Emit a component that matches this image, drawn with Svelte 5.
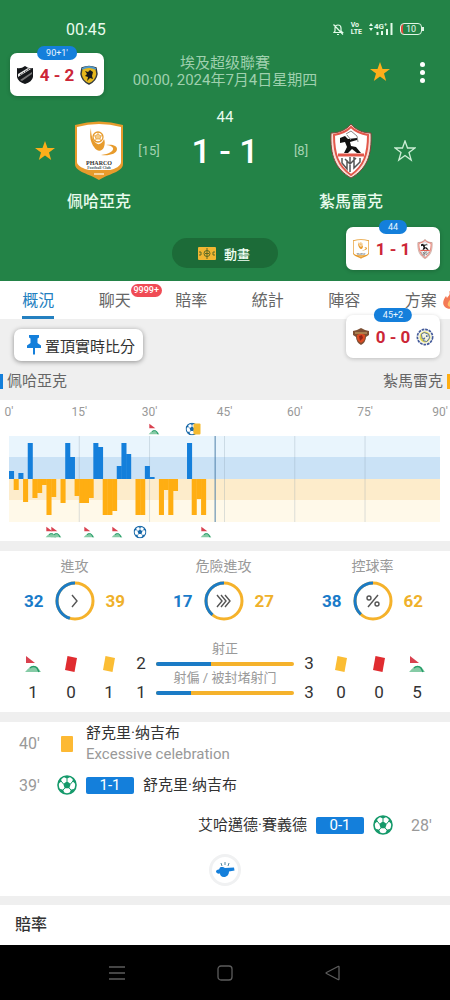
<script>
  const tabs = ['概況', '聊天', '賠率', '統計', '陣容', '方案'];

  // The axis holds 90 minutes plus one added slot for each half.
  const slots = 92;
  const pct = (n) => (n / slots) * 100;
  const axis = [
    [0, "0'"], [15, "15'"], [30, "30'"], [46, "45'"], [61, "60'"], [76, "75'"], [92, "90'"]
  ];
  const homeBars = [
    [0, 8], [2, 6], [4, 36], [12, 36], [13, 22], [18, 36], [19, 32],
    [23, 13], [24, 36], [25, 25], [29, 13], [30, 2], [38, 36]
  ];
  const awayBars = [
    [1, 11], [3, 23], [5, 19], [6, 14], [7, 6], [8, 36], [9, 18], [11, 24], [14, 17], [15, 24],
    [16, 24], [17, 19], [20, 36], [21, 36], [22, 32], [27, 36], [28, 36], [32, 36], [33, 11],
    [34, 36], [35, 12], [39, 36], [40, 20], [41, 36]
  ];
  const homeMarks = [[31, 'flag'], [39, 'ball'], [40.2, 'card']];
  const awayMarks = [[9, 'flag'], [10, 'flag'], [17, 'flag'], [23, 'flag'], [28, 'ball'], [42, 'flag']];

  const rings = [
    { label: '進攻', home: 32, away: 39, icon: 'one' },
    { label: '危險進攻', home: 17, away: 27, icon: 'three' },
    { label: '控球率', home: 38, away: 62, icon: 'percent' }
  ];
  const round = 2 * Math.PI * 18;

  const homeCounts = [['corner', 1, '角球'], ['red', 0, '紅牌'], ['yellow', 1, '黃牌']];
  const awayCounts = [['yellow', 0, '黃牌'], ['red', 0, '紅牌'], ['corner', 5, '角球']];
  const shots = [
    { label: '射正', home: 2, away: 3 },
    { label: '射偏 / 被封堵射门', home: 1, away: 3 }
  ];
</script>

{#snippet flag()}
  <svg class="flag" viewBox="0 0 18 18" aria-hidden="true">
    <path d="M2 1 11 8H2Z" fill="#d9414f" />
    <path d="M1 17c3-3 5-6 9-6 3 0 5 3 7 6Z" fill="#86cba6" />
    <path d="M6 13c2-2 5-2 7 0l2 4" fill="none" stroke="#249c68" stroke-width="1.5" />
  </svg>
{/snippet}

{#snippet ball(color)}
  <svg class="ball" viewBox="0 0 20 20" aria-hidden="true">
    <circle cx="10" cy="10" r="9" fill="#fff" stroke={color} stroke-width="1.6" />
    <g fill={color}>
      <path d="m10 6.2 3.7 2.7-1.4 4.3H7.700L6.300 8.900Z" />
      <path d="M6.500 1.800 10 3.800l3.500-2L10 1Z" />
      <path d="m1.200 9.200 3.200-3-.3-3.200-2.400 3Z" />
      <path d="m18.800 9.200-3.200-3 .3-3.200 2.400 3Z" />
      <path d="m2.600 13.700 3.500 1 1.500 3.500-3-1.200Z" />
      <path d="m17.400 13.700-3.500 1-1.500 3.500 3-1.200Z" />
    </g>
    <path d="M10 6.500v-3M6.500 9 3.800 5.700M13.500 9l2.700-3.300M7.800 13l-1.700 2M12.200 13l1.700 2" fill="none" stroke={color} />
  </svg>
{/snippet}

{#snippet card(kind)}
  <svg class="card" viewBox="0 0 14 18" aria-hidden="true">
    <path d="M3.500 1 13 3 10.500 17 1 15Z" fill={kind === 'red' ? '#e02c30' : '#fbbd34'} />
  </svg>
{/snippet}

{#snippet star(filled)}
  <svg viewBox="0 0 22 22" aria-hidden="true">
    <path d="m11 1 2.500 7H21l-6 4.500L17.200 20 11 15.500 4.800 20 7 12.500 1 8h7.500Z"
      fill={filled ? '#fdae1a' : 'none'} stroke={filled ? 'none' : '#cdeed6'} stroke-width="1.3" />
  </svg>
{/snippet}

{#snippet pharco()}
  <svg viewBox="0 0 50 60" aria-hidden="true">
    <path d="M1 4Q25-3 49 4v39c0 8-15 10-24 16C16 53 1 51 1 43Z" fill="#e79b2c" />
    <path d="M3 6Q25 0 47 6v35c0 4-6 7-11 8H15C10 48 3 45 3 41Z" fill="#fff" />
    <path d="M17 7c-2 9 0 15 3 19 3 5 8 5 10 0 1-3 1-6 0-8-2 5-6 7-9 3-3-3-4-8-4-14Z" fill="#e79b2c" />
    <circle cx="24" cy="16" r="5" fill="#fff" stroke="#e79b2c" stroke-width="1.300" />
    <path d="m24 13 3 2-1 3h-4l-1-3Zm0-2v2m-3 2-2-1m8 1 2-1m-3 4 1 2m-5-2-1 2" fill="#f5cb85" stroke="#e79b2c" stroke-width=".7" />
    <path d="M27 34c8-1 13-4 12-7-1-2-4-3-7-3 7-1 11 1 11 4 0 5-8 7-16 6Z" fill="#e79b2c" />
    <text x="25" y="44" text-anchor="middle" font-family="Liberation Serif, serif" font-weight="700" font-size="6" fill="#333">PHARCO</text>
    <text x="25" y="48" text-anchor="middle" font-family="Liberation Serif, serif" font-weight="700" font-size="4" fill="#456">Football Club</text>
    <path d="M20 53h10" stroke="#f7d39c" stroke-width="2" />
  </svg>
{/snippet}

{#snippet zamalek()}
  <svg viewBox="0 0 42 56" aria-hidden="true">
    <path d="M21 1c5 6 12 9 20 9 1 22-4 36-20 45C5 46 0 32 1 10 9 10 16 7 21 1Z" fill="#f8ded6" stroke="#7c4338" />
    <path d="M21 4c5 5 11 7 17 8 0 19-4 31-17 40C8 43 4 31 4 12c6-1 12-3 17-8Z" fill="#fff" stroke="#e2574a" stroke-width="2" />
    <path d="M8 32h26" stroke="#e2574a" stroke-width="3" />
    <path d="m10 15 5-2 3 3 9-1v2l-7 2 1 4 5 1 5 6h-4l-5-4-4 4h-4l3-6-2-5-5 1Z" fill="#111" />
    <path d="m16 11 5-3 6 5 1 6M17 12l4 5" fill="none" stroke="#888" />
    <path d="M12 35v5l5 6v-9m3-3v15m4-15v11l6-6v-4M15 36l5 5 6-6" fill="none" stroke="#555" stroke-width="1.500" />
  </svg>
{/snippet}

<main class="page">
  <header class="hero">
    <div class="status">
      <span class="time">00:45</span>
      <span class="signals">
        <svg width="12" height="13" viewBox="0 0 12 13" fill="none" stroke="#e3fbe9" stroke-width="1.200" aria-hidden="true">
          <path d="M2 9.500h8.500L9 8V5c0-4-6-4-6 0v3ZM5 11.500h2M1.500 1.500l9.500 10" />
        </svg>
        <span class="volte"><b>Vo</b><b>LTE</b></span>
        <svg width="24" height="14" viewBox="0 0 24 14" aria-hidden="true">
          <path d="m0 4 2-3 2 3Zm0 2 2 3 2-3Z" fill="#e3fbe9" />
          <text x="5" y="7" font-size="8" font-weight="700" fill="#e3fbe9">4G⁺</text>
          <path d="M8.500 10v3m4.500-4v4m5-6v6m4.500-12v12" stroke="#e3fbe9" stroke-width="2" />
        </svg>
        <span class="battery">10</span>
      </span>
    </div>

    <div class="title">
      <h1>埃及超级聯賽<span>00:00, 2024年7月4日星期四</span></h1>
      <div class="actions">
        <button class="icon" aria-label="收藏比賽">{@render star(true)}</button>
        <button class="icon more" aria-label="更多"><i></i><i></i><i></i></button>
      </div>
    </div>

    <div class="match">
      <button class="icon fav" aria-label="收藏佩哈亞克">{@render star(true)}</button>
      <div class="crest">{@render pharco()}</div>
      <span class="rank">[15]</span>
      <div class="score"><span>44</span><strong>1 - 1</strong></div>
      <span class="rank">[8]</span>
      <div class="crest small">{@render zamalek()}</div>
      <button class="icon fav last" aria-label="收藏紮馬雷克">{@render star(false)}</button>
      <h2 class="home">佩哈亞克</h2>
      <h2 class="away">紮馬雷克</h2>
    </div>

    <button class="animation">
      <svg width="18" height="13" viewBox="0 0 18 13" aria-hidden="true">
        <rect width="18" height="13" rx="1" fill="#f2b632" />
        <g fill="none" stroke="#5d6a25"><circle cx="9" cy="6.500" r="3" /><path d="M9 1v11M1 5h2v3H1M17 5h-2v3h2M7 6.500h4" /></g>
      </svg>
      動畫
    </button>
  </header>

  <nav class="tabs">
    {#each tabs as tab, i}
      <a href="#tab-{i}" class:active={i === 0}>
        <span>{tab}</span>
        {#if i === 1}<b class="badge">9999+</b>{/if}
        {#if i === 5}
          <svg class="fire" viewBox="0 0 14 18" aria-hidden="true"><path d="M6 0c2 4-1 5-2 7L3 5c-3 4-4 8-1 11 3 3 9 2 11-2 1-5-3-6-3-10C9 5 9 6 9 7 9 4 8 1 6 0Z" fill="#f47a55" /><path d="M7 9c-3 3-3 6 0 7 3-1 3-4 0-7Z" fill="#ffc06d" /></svg>
        {/if}
      </a>
    {/each}
  </nav>

  <section class="intro">
    <button class="pin">
      <svg width="14" height="20" viewBox="0 0 14 20" aria-hidden="true">
        <path d="M2 0h10v2.500l-1.500 1V8L14 10.500V13H8v6l-1 1-1-1v-6H0v-2.500L3.500 8V3.500L2 2.500Z" fill="#147fdb" />
      </svg>
      置頂實時比分
    </button>
    <div class="sides"><span>佩哈亞克</span><span>紮馬雷克</span></div>
  </section>

  <section class="timeline">
    <div class="track labels">
      {#each axis as [at, text]}<span style="left: {pct(at)}%">{text}</span>{/each}
    </div>
    <div class="track marks">
      {#each homeMarks as [at, kind]}
        <span class={kind} style="left: {pct(at)}%">
          {#if kind === 'flag'}{@render flag()}{:else if kind === 'ball'}{@render ball('#1768a8')}{/if}
        </span>
      {/each}
    </div>
    <svg class="chart" viewBox="0 0 92 86" preserveAspectRatio="none" role="img" aria-label="進攻走勢">
      <rect width="92" height="21" fill="#e9f5fd" />
      <rect y="21" width="92" height="22" fill="#cae2f6" />
      <rect y="43" width="92" height="21" fill="#fdeccb" />
      <rect y="64" width="92" height="22" fill="#fff9e9" />
      {#each [15, 30, 46, 61, 76] as at}
        <line x1={at} x2={at} y1="0" y2="86" stroke="#8aa0b0" stroke-opacity=".3" vector-effect="non-scaling-stroke" />
      {/each}
      {#each homeBars as [at, h]}<rect x={at} y={43 - h} width="1.08" height={h} fill="#147fdb" />{/each}
      {#each awayBars as [at, h]}<rect x={at} y="43" width="1.08" height={h} fill="#ffae12" />{/each}
      <line x1="44" x2="44" y1="0" y2="86" stroke="#4e80aa" vector-effect="non-scaling-stroke" />
    </svg>
    <div class="track marks">
      {#each awayMarks as [at, kind]}
        <span class={kind} style="left: {pct(at)}%">
          {#if kind === 'flag'}{@render flag()}{:else}{@render ball('#1768a8')}{/if}
        </span>
      {/each}
    </div>
  </section>

  <section class="stats">
    <div class="rings">
      {#each rings as r}
        <div class="stat">
          <h3>{r.label}</h3>
          <div class="pair">
            <b class="blue">{r.home}</b>
            <svg width="40" height="40" viewBox="0 0 40 40" fill="none" aria-hidden="true">
              <circle cx="20" cy="20" r="18" stroke="#f5b22b" stroke-width="3" />
              <circle cx="20" cy="20" r="18" stroke="#1b7bc6" stroke-width="3"
                stroke-dasharray="{(round * r.home) / (r.home + r.away)} {round}" transform="matrix(0 -1 -1 0 40 40)" />
              <g stroke="#555" stroke-width="1.400">
                {#if r.icon === 'one'}<path d="m17 14 5 6-5 6" />
                {:else if r.icon === 'three'}<path d="m13 14 5 6-5 6m4-12 5 6-5 6m4-12 5 6-5 6" />
                {:else}<circle cx="16" cy="17" r="2" /><circle cx="24" cy="23" r="2" /><path d="m25 14-10 12" />{/if}
              </g>
            </svg>
            <b class="gold">{r.away}</b>
          </div>
        </div>
      {/each}
    </div>
    <div class="numbers">
      {#each homeCounts as [kind, n, name]}
        <div class="count" title={name}><span>{#if kind === 'corner'}{@render flag()}{:else}{@render card(kind)}{/if}</span><span>{n}</span></div>
      {/each}
      <div class="count edge">{#each shots as s}<span>{s.home}</span>{/each}</div>
      <div class="bars">
        {#each shots as s}
          <h3>{s.label}</h3>
          <div class="bar"><i style="width: {(s.home / (s.home + s.away)) * 100}%"></i></div>
        {/each}
      </div>
      <div class="count edge">{#each shots as s}<span>{s.away}</span>{/each}</div>
      {#each awayCounts as [kind, n, name]}
        <div class="count" title={name}><span>{#if kind === 'corner'}{@render flag()}{:else}{@render card(kind)}{/if}</span><span>{n}</span></div>
      {/each}
    </div>
  </section>

  <section class="events">
    <div class="event">
      <time>40'</time>
      <span class="mark"><i class="booking"></i></span>
      <p>舒克里·纳吉布<small>Excessive celebration</small></p>
    </div>
    <div class="event">
      <time>39'</time>
      <span class="mark">{@render ball('#14996a')}</span>
      <b class="result">1-1</b>
      <p>舒克里·纳吉布</p>
    </div>
    <div class="event reverse">
      <time>28'</time>
      <span class="mark">{@render ball('#14996a')}</span>
      <b class="result">0-1</b>
      <p>艾哈邁德·賽義德</p>
    </div>
    <div class="whistle">
      <svg width="20" height="16" viewBox="0 0 20 16" aria-hidden="true">
        <path d="M5 5.500c2-1 4 0 5 .5l9-.5.500 3-5.500 1c0 3-2 5.500-5 5.500-3 0-4-2-4-3.500-2 .5-4-.5-4-2s2-2 3-2Z" fill="#147fdb" />
        <path d="m6 1 1 3M10 0v3M14 1l-1 3" stroke="#5086a0" />
      </svg>
    </div>
  </section>

  <section class="odds"><h2>賠率</h2></section>

  <footer class="system">
    <button class="icon" aria-label="最近"><svg viewBox="0 0 18 18"><path d="M1 3h16M1 9h16M1 15h16" /></svg></button>
    <button class="icon" aria-label="主頁"><svg viewBox="0 0 18 18"><rect x="2" y="2" width="14" height="14" rx="3" /></svg></button>
    <button class="icon" aria-label="返回"><svg viewBox="0 0 18 18"><path d="M15 3v12q0 1-1 .5L2.500 9.500q-1-.5 0-1L14 2.500q1-.5 1 .5Z" /></svg></button>
  </footer>

  <aside class="live one">
    <em>90+1'</em>
    <svg viewBox="0 0 18 20" aria-hidden="true"><path d="M1 3q4 1 8-2 4 3 8 2v9q-1 5-8 7-7-2-8-7Z" fill="#15171a" /><path d="m2 9 10-6 3 1L2 12Z" fill="#e9e9e9" /><path d="m4 15 12-8v2L6 16Z" fill="#777" /><path d="m4 10 9-6" stroke="#444" stroke-dasharray="2 1" /></svg>
    <strong>4 - 2</strong>
    <svg viewBox="0 0 18 20" aria-hidden="true"><path d="M2 3q7-3 14 0l1 6q-1 7-8 10-7-3-8-10Z" fill="#e6b71c" stroke="#333a3c" stroke-width="1.500" /><path d="M2 4q7-4 14 0" fill="none" stroke="#4f97c9" stroke-width="2" /><path d="m5 6 3 1 2-2 3 2-1 4 1 3-3-1-3 3 1-4-3-1 2-2Z" fill="#17191a" /></svg>
  </aside>
  <aside class="live two">
    <em>44</em>
    {@render pharco()}
    <strong>1 - 1</strong>
    {@render zamalek()}
  </aside>
  <aside class="live three">
    <em>45+2</em>
    <svg viewBox="0 0 18 20" aria-hidden="true"><path d="m1 4 4-1 4-2 4 2 4 1v4l-3 2q0 5-5 8-5-3-5-8L1 8Z" fill="#7d5035" /><path d="m5 8 4-2 4 2q1 5-4 8-5-3-4-8Z" fill="#dc4b22" /><path d="M3 6h12" stroke="#b98e55" stroke-width="1.500" /><path d="m7 9 3-1 1 3-3 3Z" fill="#922418" /></svg>
    <strong>0 - 0</strong>
    <svg viewBox="0 0 20 20" aria-hidden="true"><circle cx="10" cy="10" r="8.500" fill="#f4f5e8" stroke="#43599a" stroke-width="1.800" stroke-dasharray="3 1" /><circle cx="10" cy="10" r="6" fill="#e5da4c" /><path d="m6 7 3-2 5 2 1 4-3 4-4-1 2-3-3 1Z" fill="#f5f5df" stroke="#4d67a6" /><circle cx="12" cy="9" r="1" fill="#33508c" /></svg>
  </aside>
</main>

<style>
  :global(body) { margin: 0; background: #efefef; }
  .page {
    position: relative;
    overflow: hidden;
    font-family: Roboto, "Noto Sans CJK TC", "Noto Sans CJK SC", sans-serif;
    font-size: 15px;
    color: #333;
    background: #efefef;
  }
  h1, h2, h3, p { margin: 0; font-weight: 400; }
  button { font: inherit; border: 0; cursor: pointer; }
  svg { display: block; }
  .icon { display: block; padding: 0; background: none; }
  .icon svg { width: 22px; height: 22px; }

  .hero { background: #238347; color: #e9fbee; padding-bottom: 13px; }
  .status { display: flex; justify-content: space-between; align-items: center; height: 28px; padding: 15px 28px 12px 66px; }
  .time { font-size: 16px; }
  .signals { display: flex; align-items: center; gap: 7px; }
  .volte { display: flex; flex-direction: column; font-size: 7px; line-height: 7px; }
  .battery { position: relative; width: 20px; height: 10px; border: 1px solid #dff5e5; border-radius: 4px; font-size: 9px; line-height: 10px; text-align: center; box-shadow: inset 3px 0 0 -1px #e5483c; }
  .battery::after { content: ""; position: absolute; right: -3px; top: 3px; width: 2px; height: 4px; background: #dff5e5; }
  .title { display: grid; grid-template-columns: 1fr auto 1fr; align-items: center; }
  h1 { grid-column: 2; font-size: 15px; line-height: 17px; text-align: center; color: #9fd0ae; }
  h1 span { display: block; }
  .actions { display: flex; justify-content: flex-end; align-items: center; gap: 21px; padding-right: 18px; }
  .more { display: grid; gap: 3px; justify-items: center; width: 20px; }
  .more i { width: 5px; height: 5px; border-radius: 50%; background: #fff; }

  .match { display: grid; grid-template-columns: 30px 70px 30px 1fr 30px 70px 30px; align-items: end; margin-top: 19px; padding: 0 34px; }
  .fav { height: 60px; }
  .last { justify-self: end; }
  .crest { display: grid; place-items: center; height: 60px; }
  .crest svg { width: 50px; height: 60px; }
  .crest.small svg { width: 42px; height: 56px; }
  .rank { font-size: 13px; line-height: 60px; text-align: center; color: #a3d2b1; }
  .score { display: flex; flex-direction: column; align-items: center; padding-bottom: 5px; line-height: 18px; }
  .score strong { font-size: 34px; line-height: 50px; font-weight: 500; color: #fff; white-space: nowrap; }
  .match h2 { margin-top: 11px; font-size: 16px; line-height: 20px; font-weight: 500; text-align: center; white-space: nowrap; }
  .match .home { grid-column: 1 / 4; }
  .match .away { grid-column: 5 / 8; }
  .animation { display: flex; align-items: center; gap: 8px; height: 30px; margin: 26px auto 0; padding: 0 28px 0 26px; border-radius: 15px; background: #1c6b38; color: #f1fff4; font-size: 13px; font-weight: 500; }

  .tabs { display: flex; height: 38px; background: #fff; overflow: hidden; }
  .tabs a { position: relative; flex: 0 0 17%; display: flex; justify-content: center; color: #666; text-decoration: none; font-size: 16px; line-height: 39px; }
  .tabs a span { height: 35px; }
  .tabs .active { color: #2480c0; }
  .tabs .active span { border-bottom: 3px solid #2480c0; }
  .badge { position: absolute; left: 54px; top: 3px; padding: 0 3px; border-radius: 7px; background: #f04b55; color: #fff; font-size: 9px; line-height: 13px; font-weight: 500; }
  .fire { position: absolute; left: 60px; top: 10px; width: 14px; height: 18px; }

  .intro { padding: 10px 0 9px; }
  .pin { display: flex; align-items: center; gap: 4px; height: 32px; margin-left: 14px; padding: 0 8px 0 13px; border-radius: 7px; background: #fff; color: #333; font-size: 15px; box-shadow: 0 1px 5px #0006; }
  .sides { display: flex; justify-content: space-between; margin-top: 10px; line-height: 20px; color: #666; }
  .sides span { display: flex; align-items: center; gap: 4px; }
  .sides span:first-child::before, .sides span:last-child::after { content: ""; width: 3px; height: 15px; background: #147fdb; }
  .sides span:last-child::after { background: #ffae12; }

  .timeline { padding: 3px 10px 0 9px; background: #fff; }
  .track { position: relative; height: 18px; }
  .track span { position: absolute; top: 50%; transform: translate(-50%, -50%); }
  .labels { font-size: 12px; color: #999; }
  .marks { height: 15px; }
  .marks .flag svg { width: 12px; height: 12px; }
  .marks .ball svg { width: 13px; height: 13px; }
  .marks .card { width: 7px; height: 11px; border-radius: 1px; background: #f4b92f; }
  .chart { width: 100%; height: 86px; }
  .timeline .marks:last-child { height: 19px; }

  .stats { margin-top: 10px; padding-bottom: 5px; background: #fff; }
  .rings { display: grid; grid-template-columns: repeat(3, 1fr); padding: 5px 3px 0 0; }
  h3 { font-size: 14px; line-height: 20px; color: #999; text-align: center; }
  .pair { display: flex; align-items: center; justify-content: center; gap: 11px; margin-top: 5px; font-size: 17px; }
  .blue { color: #197bc9; }
  .gold { color: #efb12b; }
  .numbers { display: flex; align-items: flex-end; margin-top: 16px; padding: 0 14px; }
  .count { flex: 0 0 38px; font-size: 17px; line-height: 29px; text-align: center; }
  .count span { display: grid; place-items: center; height: 29px; }
  .count .flag { width: 18px; height: 18px; }
  .count .card { width: 14px; height: 18px; }
  .edge { flex-basis: 26px; }
  .bars { flex: 1; padding: 0 2px 12px; }
  .bars h3 { font-size: 13px; line-height: 16px; margin: 4px 0 5px; }
  .bar { height: 4px; border-radius: 2px; background: #f5b22b; overflow: hidden; }
  .bar i { display: block; height: 4px; background: #1b7bc6; }

  .events { margin-top: 10px; padding-bottom: 10px; background: #fff; }
  .event { display: flex; align-items: center; gap: 9px; min-height: 40px; padding: 0 19px; }
  .event:first-child { min-height: 43px; }
  .reverse { flex-direction: row-reverse; padding: 0 17px; }
  time { width: 29px; font-size: 16px; color: #999; }
  .reverse time { width: 22px; }
  .reverse .mark { margin: 0 9px 0 0; }
  .mark { width: 20px; }
  .mark .ball { width: 20px; height: 20px; }
  .booking { display: block; width: 12px; height: 16px; margin: 0 auto; border-radius: 1px; background: #fdb934; }
  .event p { line-height: 21px; white-space: nowrap; }
  .event small { display: block; font-size: 15px; color: #999; }
  .result { width: 48px; border-radius: 2px; background: #147fdb; color: #fff; font-weight: 400; line-height: 17px; text-align: center; }
  .whistle { display: grid; place-items: center; width: 26px; height: 26px; margin: 9px auto 0; border: 3px solid #f0f1f2; border-radius: 50%; }

  .odds { margin-top: 9px; padding: 10px 15px; background: #fff; }
  .odds h2 { font-size: 16px; line-height: 20px; font-weight: 500; }
  .system { display: flex; justify-content: center; gap: 90px; padding: 18px 0; background: #000; }
  .system .icon svg { width: 18px; height: 18px; margin: 0; fill: none; stroke: #5c5c5c; stroke-width: 1.300; }
  .system .icon { height: 19px; }

  .live { position: absolute; display: flex; align-items: center; justify-content: space-between; box-sizing: border-box; width: 94px; height: 43px; padding: 0 6px; border-radius: 7px; background: #fff; box-shadow: 0 1px 4px #0003; }
  .live svg { width: 18px; height: 20px; }
  .live strong { font-size: 17px; color: #cc2637; white-space: nowrap; }
  .live em { position: absolute; left: 50%; top: -7px; transform: translateX(-50%); padding: 0 9px; border-radius: 7px; background: #147fdb; color: #e8f6ff; font-size: 9px; line-height: 14px; font-style: normal; }
  .one { left: 10px; top: 53px; }
  .two { right: 10px; top: 227px; }
  .three { right: 10px; top: 315px; }
</style>
